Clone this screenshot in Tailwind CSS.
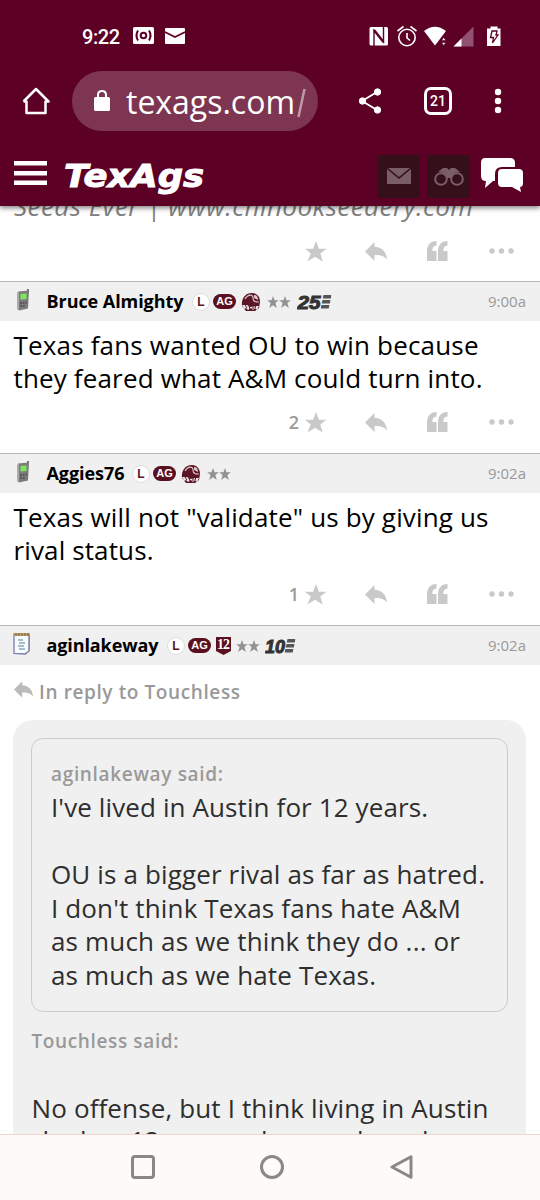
<!DOCTYPE html>
<html lang="en">
<head>
<meta charset="utf-8">
<title>TexAgs</title>
<script src="https://cdn.jsdelivr.net/npm/@tailwindcss/browser@4"></script>
</head>
<body class="bg-white">
<svg class="hidden">
  <symbol id="star" viewBox="0 0 22 22"><path d="M11 0l3 8h8l-6.500 5 2.500 8.500-8-5-8 5L5.500 13-.5 8H8z"/></symbol>
  <symbol id="reply" viewBox="0 0 22 19"><path d="M0 9.500L9.500 0v4.700C17 5 21.500 10 22 17.500c-3-4-7-5-12.500-4.500v6z"/></symbol>
  <symbol id="quote" viewBox="0 0 21 20"><path d="M9.500 0v4.500C6.500 4.700 5.300 6.500 5.300 10h4.200v10H0v-9C0 4 3 .3 9.500 0zM20.500 0v4.500c-3 .2-4.200 2-4.200 5.500h4.200v10H11v-9C11 4 14 .3 20.500 0z"/></symbol>
  <symbol id="dots" viewBox="0 0 25 6"><circle cx="3" cy="3" r="2.700"/><circle cx="12.500" cy="3" r="2.700"/><circle cx="22" cy="3" r="2.700"/></symbol>
  <symbol id="stars2" viewBox="0 0 24 12"><path d="M6 0l1.500 4.200h4.300L8.400 7l1.400 5L6 9.200 2.200 12l1.400-5L.2 4.200h4.300zM18 0l1.500 4.200h4.300L20.400 7l1.400 5L18 9.200 14.200 12l1.400-5-3.400-2.800h4.300z"/></symbol>
  <symbol id="phone" viewBox="0 0 14 22"><path d="M11 0h2v4h-2z" fill="#777"/><path d="M2 2.500l11-1-1 18-9 2-2-2z" fill="#7c7c7c"/><path d="M1 3.500l2-1v18l-2-1z" fill="#aaa"/><path d="M4.500 5l6-.5v5.500l-6 .5z" fill="#7be85a"/><path d="M4 13h2v2H4zM7 13h1.500v2H7zM9.500 12.500H11v2H9.500zM4 16h2v2H4zM7 16h1.500v2H7z" fill="#555"/></symbol>
  <symbol id="helmet" viewBox="0 0 20 18"><path d="M1 13C0 6 4 0 11 0c5 0 8 4 8 9l-1 6-4 3H5z" fill="#5b1524"/><path d="M4 6c3-5 8-5 8-1s3 4 6 4" fill="none" stroke="#d8c3c8" stroke-width="1.200"/><path d="M13 2c3 0 4 2 4 5l-4-2z" fill="#d8c3c8"/><path d="M1 12l5 0 3 2 6-1 3 0-2 4-2-2-2 2-2-2-3 2-2-2-2 1z" fill="#ece4e6"/><path d="M4 12l2 3M8 13l1 3M12 12v4M15 12l-1 3" stroke="#5b1524" stroke-width="1"/></symbol>
  <symbol id="pad" viewBox="0 0 18 23"><path d="M1 2h15v17l-4 3-11-.5z" fill="#f7fbff" stroke="#777cae" stroke-width="1.300"/><path d="M16.300 3v16l-4 3.300" fill="none" stroke="#8a8a8a"/><path d="M1 1h15v3H1z" fill="#c5a367"/><path d="M3 1v3M6 1v3M9 1v3M12 1v3M15 1v3" stroke="#715e3e"/><path d="M5 8h5M6 11h6M5 14h6M6 17h6" stroke="#55858b" stroke-width="1.200"/></symbol>
  <symbol id="speed" viewBox="0 0 11 14"><path d="M3 0h8l-.7 3.500H2.200zM2 5h8l-.7 3.500H1.200zM.9 10h8l-.7 3.500H.2z" fill="#555"/></symbol>
</svg>
<div class="relative flex h-[1200px] w-[540px] flex-col overflow-hidden bg-white font-['Open_Sans','Noto_Sans',sans-serif]">
  <header class="relative z-10 flex h-[206px] shrink-0 flex-col bg-[#5c0025] text-white shadow-[0_2px_5px_rgba(0,0,0,0.5)]">
    <div class="flex h-[72px] items-center pl-[82px]">
      <span class="w-[51px] font-[Roboto,sans-serif] text-[20px] leading-6 font-medium"><svg width="39" height="24" class="block"><text x="0" y="20" textLength="38" fill="#fff">9:22</text></svg></span>
      <svg width="21" height="18" viewBox="0 0 21 18"><rect width="21" height="17" rx="1.500" fill="#fff"/><g fill="none" stroke="#5c0025" stroke-width="2"><circle cx="10.500" cy="8.500" r="2.800"/><path d="M5 3.500q-3 5 0 10M16 3.500q3 5 0 10"/></g></svg>
      <svg width="20" height="16" viewBox="0 0 20 16" class="ml-[11px]"><rect width="20" height="16" rx="1" fill="#fff"/><path d="M0 4l10 5 10-5" fill="none" stroke="#5c0025" stroke-width="1.600"/></svg>
      <svg width="135" height="24" viewBox="0 0 135 24" class="ml-[184px]">
        <rect x="0.500" y="3" width="18.500" height="18.500" rx="1.500" fill="#fff"/><path d="M5 22V6.500L14.500 18V3" fill="none" stroke="#5c0025" stroke-width="1.400"/><path d="M5 6l9.500 12" stroke="#5c0025" stroke-width="2.400"/>
        <g fill="none" stroke="#fff" stroke-width="1.600"><circle cx="38" cy="13.500" r="8.200"/><path d="M38 9v5l3 2.500M28.500 7l6-4.500M47.500 7l-6-4.500"/></g>
        <path d="M55 7q11-8.500 22 0l-11 14.500z" fill="#fff"/><path d="M72.500 16.500l2.200-3 2.200 3zM72.500 18.500h4.400l-2.200 3z" fill="#fff" stroke="#5c0025" stroke-width=".6"/>
        <path d="M84.500 22.500l20-20v20z" fill="#905270"/><path d="M84.500 22.500l8-8v8z" fill="#fff"/>
        <path d="M118 4.500h3.500v-2h7v2h3V22H118z" fill="#fff"/><path d="M123 7h5l-1 4h2l-5.500 8 1-5.500h-3z" fill="none" stroke="#5c0025" stroke-width="1.300"/>
      </svg>
    </div>
    <div class="flex h-[58px] items-center">
      <svg width="28" height="28" viewBox="0 0 28 28" class="ml-[22px] fill-none stroke-white stroke-[2.500]"><path d="M1.500 14.500L14 2l12.500 12.500h-3V26h-19V14.500h-3" stroke-linejoin="round"/></svg>
      <div class="ml-[22px] flex h-[60px] w-[246px] items-center rounded-full bg-[#7d3551]">
        <svg width="16" height="22" viewBox="0 0 16 22" class="ml-[22px]"><rect y="7" width="16" height="14" rx="1.500" fill="#fff"/><path d="M4 8V5q0-4 4-4t4 4v3" fill="none" stroke="#fff" stroke-width="2"/></svg>
        <svg width="184" height="44" class="ml-[15px] font-['Open_Sans','Noto_Sans',sans-serif] text-[32px]"><text x="1" y="35" fill="#fff" textLength="169">texags.com</text><path d="M173.500 38l6-28" stroke="#be9aa8" stroke-width="2.500"/></svg>
      </div>
      <svg width="24" height="26" viewBox="0 0 24 26" class="ml-[40px] fill-white stroke-white"><path d="M4 13L19 4M4 13l15 9" stroke-width="2"/><circle cx="4.500" cy="13" r="3.200"/><circle cx="19.500" cy="4" r="3.200"/><circle cx="19.500" cy="22" r="3.200"/></svg>
      <div class="ml-[42px] flex size-[28px] items-center justify-center rounded-[7px] border-3 border-white font-[Roboto,sans-serif] text-[14px] font-medium">21</div>
      <svg width="8" height="26" viewBox="0 0 8 26" class="ml-[42px] fill-white"><circle cx="4" cy="4" r="3.200"/><circle cx="4" cy="13" r="3.200"/><circle cx="4" cy="22" r="3.200"/></svg>
    </div>
    <div class="flex h-[76px] items-center pt-4">
      <svg width="33" height="26" viewBox="0 0 33 26" class="mb-[6px] ml-[14px] fill-white"><path d="M0 1h33v4.500H0zM0 11h33v4.500H0zM0 20.500h33V25H0z"/></svg>
      <svg width="146" height="46" viewBox="0 0 146 46" class="ml-[16px] font-['DejaVu_Sans'] text-[32px] font-bold italic"><text x="1" y="34" textLength="140" lengthAdjust="spacingAndGlyphs" fill="#fff" stroke="#fff" stroke-width="1">TexAgs</text></svg>
      <div class="ml-[168px] flex size-[43px] items-center justify-center bg-[#35101b]"><svg width="24" height="16" viewBox="0 0 24 16"><path d="M0 1l12 10L24 1v15H0zM1 0h22L12 9z" fill="#7b5d67"/></svg></div>
      <div class="ml-[7px] flex size-[43px] items-center justify-center bg-[#35101b]"><svg width="30" height="19" viewBox="0 0 30 19"><g fill="none" stroke="#7b5d67" stroke-width="2"><circle cx="7" cy="12" r="5.800"/><circle cx="23" cy="12" r="5.800"/></g><path d="M4 5l5-4h4l2 2 2-2h4l5 4q-7-1-9 6h-4Q11 4 4 5z" fill="#7b5d67"/></svg></div>
      <svg width="44" height="36" viewBox="0 0 44 36" class="mb-[2px] ml-[10px] fill-white"><path d="M5 1h25q5 0 5 5v4H22q-7 0-7 7v7h-2l-8 7 1-7q-5 0-5-5V6q0-5 4-5z"/><path d="M22 12h17q4 0 4 4v10q0 4-3 4l1 5-9-5H22q-4 0-4-4V16q0-4 4-4z"/></svg>
    </div>
  </header>

  <main class="flex min-h-0 flex-1 flex-col overflow-hidden text-black">
    <section class="flex h-[75px] shrink-0 flex-col">
      <div class="-mt-[15px] h-[39px] pl-[13px]"><svg width="480" height="39" class="text-[26px] font-normal italic"><text x="1" y="25" textLength="459" fill="#808080">Seeds Ever | www.chinookseedery.com</text></svg></div>
      <div class="mt-[10px] flex h-[22px] items-center fill-[#c9c9c9] pl-[305px]"><svg width="22" height="21"><use href="#star"/></svg><svg width="22" height="19" class="ml-[38px]"><use href="#reply"/></svg><svg width="21" height="20" class="ml-[40px]"><use href="#quote"/></svg><svg width="25" height="6" class="ml-[41px]"><use href="#dots"/></svg></div>
    </section>

    <article class="flex h-[172px] shrink-0 flex-col border-t-[1px] border-[#b8b8b8]">
      <div class="flex h-[39px] items-center bg-[#f0f0f0] pr-[14px] pl-[16px]">
        <svg width="14" height="22" class="-mt-1"><use href="#phone"/></svg>
        <svg width="140" height="28" class="ml-[16px] text-[18px] font-bold"><text x="0.500" y="20" textLength="137">Bruce Almighty</text></svg>
        <span class="ml-[6px] flex size-[18px] items-center justify-center rounded-full border border-[#ddd] bg-white font-['Liberation_Sans'] text-[12px] font-bold text-[#5b1524]">L</span>
        <span class="ml-[3px] flex h-[15px] w-[23px] items-center justify-center rounded-full bg-[#5b1020] font-['Liberation_Sans'] text-[11px] font-bold text-white">AG</span>
        <svg width="20" height="18" class="ml-[5px]"><use href="#helmet"/></svg>
        <svg width="24" height="12" class="ml-[6px] fill-[#929292]"><use href="#stars2"/></svg>
        <svg width="36" height="22" class="ml-[6px] fill-[#333] font-['Liberation_Sans'] text-[18px] font-bold italic"><text x="0.500" y="17.500" textLength="23" lengthAdjust="spacingAndGlyphs" stroke="#333" stroke-width="1">25</text><use href="#speed" x="23.500" y="4" width="11" height="14"/></svg>
        <span class="ml-auto text-[15px] text-[#999]">9:00a</span>
      </div>
      <div class="h-[75px] pl-[13px]"><svg width="500" height="75" class="text-[26px]"><text x="0.500" y="34" textLength="465">Texas fans wanted OU to win because</text><text x="0.500" y="67" textLength="469">they feared what A&amp;M could turn into.</text></svg></div>
      <div class="mt-[15px] flex h-[22px] items-center fill-[#c9c9c9]"><span class="w-[299px] text-right text-[18px] font-semibold text-[#999]">2</span><svg width="22" height="21" class="ml-[6px]"><use href="#star"/></svg><svg width="22" height="19" class="ml-[38px]"><use href="#reply"/></svg><svg width="21" height="20" class="ml-[40px]"><use href="#quote"/></svg><svg width="25" height="6" class="ml-[41px]"><use href="#dots"/></svg></div>
    </article>

    <article class="flex h-[172px] shrink-0 flex-col border-t-[1px] border-[#b8b8b8]">
      <div class="flex h-[39px] items-center bg-[#f0f0f0] pr-[14px] pl-[16px]">
        <svg width="14" height="22" class="-mt-1"><use href="#phone"/></svg>
        <svg width="80" height="28" class="ml-[16px] text-[18px] font-bold"><text x="0.500" y="20" textLength="78">Aggies76</text></svg>
        <span class="ml-[6px] flex size-[18px] items-center justify-center rounded-full border border-[#ddd] bg-white font-['Liberation_Sans'] text-[12px] font-bold text-[#5b1524]">L</span>
        <span class="ml-[3px] flex h-[15px] w-[23px] items-center justify-center rounded-full bg-[#5b1020] font-['Liberation_Sans'] text-[11px] font-bold text-white">AG</span>
        <svg width="20" height="18" class="ml-[5px]"><use href="#helmet"/></svg>
        <svg width="24" height="12" class="ml-[6px] fill-[#929292]"><use href="#stars2"/></svg>
        <span class="ml-auto text-[15px] text-[#999]">9:02a</span>
      </div>
      <div class="h-[75px] pl-[13px]"><svg width="500" height="75" class="text-[26px]"><text x="0.500" y="34" textLength="475">Texas will not "validate" us by giving us</text><text x="0.500" y="67" textLength="140">rival status.</text></svg></div>
      <div class="mt-[15px] flex h-[22px] items-center fill-[#c9c9c9]"><span class="w-[299px] text-right text-[18px] font-semibold text-[#999]">1</span><svg width="22" height="21" class="ml-[6px]"><use href="#star"/></svg><svg width="22" height="19" class="ml-[38px]"><use href="#reply"/></svg><svg width="21" height="20" class="ml-[40px]"><use href="#quote"/></svg><svg width="25" height="6" class="ml-[41px]"><use href="#dots"/></svg></div>
    </article>

    <article class="flex shrink-0 flex-col border-t-[1px] border-[#b8b8b8]">
      <div class="flex h-[39px] items-center bg-[#f0f0f0] pr-[14px] pl-[13px]">
        <svg width="18" height="23" class="-mt-1"><use href="#pad"/></svg>
        <svg width="115" height="28" class="ml-[15px] text-[18px] font-bold"><text x="0.500" y="20" textLength="112">aginlakeway</text></svg>
        <span class="ml-[6px] flex size-[18px] items-center justify-center rounded-full border border-[#ddd] bg-white font-['Liberation_Sans'] text-[12px] font-bold text-[#5b1524]">L</span>
        <span class="ml-[3px] flex h-[15px] w-[23px] items-center justify-center rounded-full bg-[#5b1020] font-['Liberation_Sans'] text-[11px] font-bold text-white">AG</span>
        <svg width="15" height="18" viewBox="0 0 15 18" class="ml-[5px] font-['Liberation_Serif'] text-[14px] font-bold"><path d="M0 0h15v14l-7.500 4L0 14z" fill="#5b1020"/><text x="1" y="12" textLength="13" fill="#fff">12</text></svg>
        <svg width="24" height="12" class="ml-[5px] fill-[#929292]"><use href="#stars2"/></svg>
        <svg width="36" height="22" class="ml-[5px] fill-[#333] font-['Liberation_Sans'] text-[18px] font-bold italic"><text x="0" y="17.500" textLength="20" lengthAdjust="spacingAndGlyphs" stroke="#333" stroke-width="1">10</text><use href="#speed" x="19.500" y="4" width="11" height="14"/></svg>
        <span class="ml-auto text-[15px] text-[#999]">9:02a</span>
      </div>
      <div class="flex h-[55px] items-center pl-[14px]"><svg width="19" height="17" viewBox="0 0 22 19" class="mb-[6px] fill-[#bbb]"><use href="#reply"/></svg><svg width="205" height="30" class="ml-[6px] text-[19px] font-semibold"><text x="0" y="21" textLength="201" fill="#999">In reply to Touchless</text></svg></div>
      <div class="mr-[14px] ml-[13px] flex h-[500px] flex-col rounded-[20px] bg-[#f0f0f0] px-[18px] pt-[18px]">
        <div class="h-[274px] w-[477px] rounded-[12px] border border-[#ccc] pt-[19px] pl-[19px]">
          <svg width="450" height="240" class="text-[26px]"><text x="0" y="23" textLength="172" class="text-[19px] font-semibold" fill="#999">aginlakeway said:</text><g fill="#2e2e2e"><text x="0" y="59" textLength="377">I've lived in Austin for 12 years.</text><text x="0" y="126" textLength="434">OU is a bigger rival as far as hatred.</text><text x="0" y="160" textLength="410">I don't think Texas fans hate A&amp;M</text><text x="0" y="193" textLength="409">as much as we think they do ... or</text><text x="0" y="227" textLength="325">as much as we hate Texas.</text></g></svg>
        </div>
        <svg width="480" height="160" class="mt-[10px] text-[26px]"><text x="0.500" y="26" textLength="147" class="text-[19px] font-semibold" fill="#999">Touchless said:</text><g fill="#2e2e2e"><text x="0.500" y="96" textLength="457">No offense, but I think living in Austin</text><text x="-1" y="128">she <tspan x="49">has</tspan> <tspan x="99">12</tspan> <tspan x="136">years</tspan> <tspan x="230">he</tspan> <tspan x="326">has</tspan> <tspan x="391">be</tspan></text></g></svg>
      </div>
    </article>
  </main>

  <nav class="flex h-[66px] shrink-0 items-center border-t border-[#f1d5d0] bg-[#fffafa]">
    <svg width="24" height="24" class="mb-px ml-[131px] fill-none stroke-[#8b8786] stroke-3"><rect x="1.500" y="1.500" width="21" height="21" rx="2.500"/></svg>
    <svg width="24" height="24" class="mb-px ml-[105px] fill-none stroke-[#8b8786] stroke-3"><circle cx="12" cy="12" r="10.500"/></svg>
    <svg width="24" height="24" class="mb-px ml-[106px] fill-none stroke-[#8b8786] stroke-3"><path d="M2 12L21 1.700v20.600z" stroke-linejoin="round"/></svg>
  </nav>
</div>
</body>
</html>
